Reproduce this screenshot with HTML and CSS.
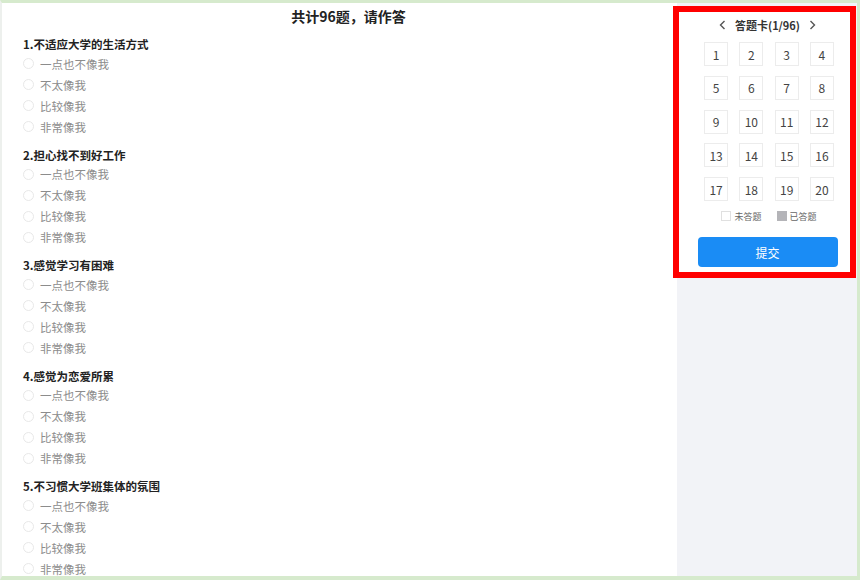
FILE: index.html
```html
<!DOCTYPE html>
<html lang="zh-CN">
<head>
  <meta charset="UTF-8" />
  <meta name="viewport" content="width=device-width, initial-scale=1" />
  <title>心理测评 - 答题</title>
  <link rel="stylesheet" href="styles.css">
</head>
<body>

<div class="marco">
  <main class="hoja">
    <h1 class="titulo">共计96题，请作答</h1>
    <div id="preguntas">
      <!-- Preguntas se insertan por JS -->
    </div>
  </main>

  <aside class="lateral">
    <div class="tarjeta">
      <div class="tarjeta-cabecera">
        <svg class="flecha" width="7" height="10" viewBox="0 0 7 10"><path d="M5.5 1 L1.5 5 L5.5 9" fill="none" stroke="#555" stroke-width="1.4"/></svg>
        <span>答题卡(1/96)</span>
        <svg class="flecha" width="7" height="10" viewBox="0 0 7 10"><path d="M1.5 1 L5.5 5 L1.5 9" fill="none" stroke="#555" stroke-width="1.4"/></svg>
      </div>
      <div class="numeros" id="numeros"></div>
      <div class="leyenda">
        <span class="cuadro"></span>未答题
        <span class="cuadro lleno"></span>已答题
      </div>
      <button class="enviar" type="button">提交</button>
    </div>
  </aside>
</div>

<script>
  // Primeras preguntas del cuestionario
  const preguntas = [
    '不适应大学的生活方式',
    '担心找不到好工作',
    '感觉学习有困难',
    '感觉为恋爱所累',
    '不习惯大学班集体的氛围'
  ];
  const opciones = ['一点也不像我', '不太像我', '比较像我', '非常像我'];

  const contenedor = document.getElementById('preguntas');
  preguntas.forEach((texto, i) => {
    const div = document.createElement('div');
    div.className = 'pregunta';
    div.innerHTML = `<h3>${i + 1}.${texto}</h3>` +
      opciones.map(o => `<label class="opcion"><span class="radio"></span>${o}</label>`).join('');
    contenedor.appendChild(div);
  });

  // Tarjeta de respuestas: 20 por página
  const numeros = document.getElementById('numeros');
  for (let n = 1; n <= 20; n++) {
    const celda = document.createElement('span');
    celda.className = 'celda';
    celda.textContent = n;
    numeros.appendChild(celda);
  }
</script>

</body>
</html>
```
FILE: styles.css
```css
* {
  box-sizing: border-box;
}

body {
  margin: 0;
  font-family: "Noto Sans CJK SC", "Noto Sans", sans-serif;
  color: #222;
  background: #d6eacd;
}

.marco {
  width: 860px;
  height: 580px;
  border-top: 3px solid #d6eacd;
  border-right: 3px solid #d6eacd;
  border-bottom: 4px solid #d6eacd;
  border-left: 2px solid #edf0ed;
  display: flex;
  overflow: hidden;
  background: #fff;
}

/* Zona de preguntas */
.hoja {
  flex: 1;
  background: #fff;
  padding: 3px 0 0 21px;
  overflow: hidden;
}

.titulo {
  margin: 0 0 9px;
  font-size: 14px;
  line-height: 20px;
  font-weight: bold;
  text-align: center;
  padding-right: 3px;
  color: #222;
}

.pregunta {
  margin-bottom: 8.5px;
}

.pregunta h3 {
  margin: 0;
  font-size: 11.5px;
  line-height: 18px;
  font-weight: bold;
  color: #222;
}

.opcion {
  display: flex;
  align-items: center;
  height: 21px;
  font-size: 11.5px;
  color: #8c8c8c;
}

.radio {
  width: 11px;
  height: 11px;
  border: 1px solid #e8e8e8;
  border-radius: 50%;
  margin-right: 6px;
}

/* Columna derecha */
.lateral {
  width: 180px;
  background: #f2f3f7;
  padding-top: 3px;
}

.tarjeta {
  margin-left: -4px;
  margin-right: 1px;
  background: #fff;
  border: 6px solid #ff0000;
  padding: 3px 0 5px 6px;
  display: flex;
  flex-direction: column;
  align-items: center;
}

.tarjeta-cabecera {
  display: flex;
  align-items: center;
  gap: 9px;
  height: 20px;
  font-size: 11px;
  font-weight: bold;
  color: #333;
}

.numeros {
  margin: 7px 0 0 3px;
  display: grid;
  grid-template-columns: repeat(4, 24px);
  column-gap: 11.3px;
  row-gap: 9.8px;
}

.celda {
  width: 24px;
  height: 24px;
  border: 1px solid #ececec;
  display: flex;
  align-items: center;
  justify-content: center;
  font-size: 12px;
  color: #444;
}

.leyenda {
  margin: 8px 0 0 3px;
  display: flex;
  align-items: center;
  height: 14px;
  font-size: 9px;
  color: #666;
}

.cuadro {
  width: 10px;
  height: 10px;
  border: 1px solid #e0e0e0;
  margin-right: 3px;
}

.cuadro.lleno {
  background: #b4b4b8;
  border-color: #b4b4b8;
  margin-left: 15px;
}

.enviar {
  margin-top: 14px;
  width: 140px;
  height: 30px;
  border: none;
  border-radius: 4px;
  background: #1a8cf5;
  color: #fff;
  font-family: inherit;
  font-size: 12px;
}
```
